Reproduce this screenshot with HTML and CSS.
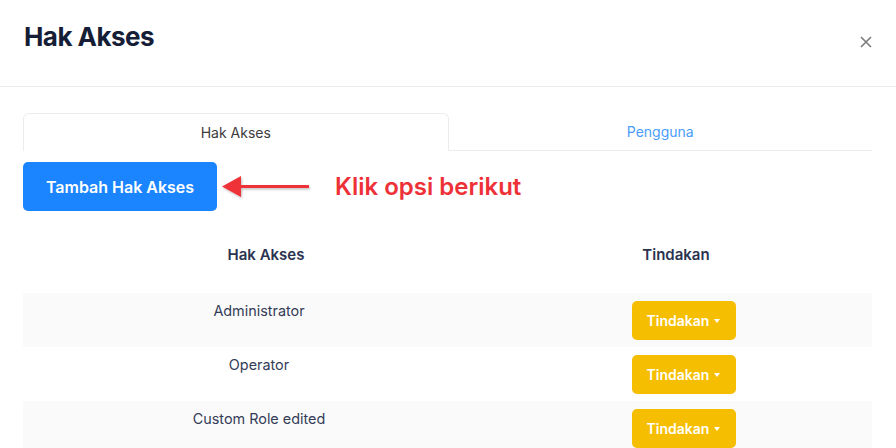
FILE: index.html
```html
<!DOCTYPE html>
<html lang="id">
<head>
<meta charset="utf-8">
<title>Hak Akses</title>
<link rel="stylesheet" href="styles.css">
</head>
<body>
<div class="modal">
  <header class="modal-header">
    <h1 class="modal-title">Hak Akses</h1>
    <button class="close-btn" aria-label="Tutup">
      <svg width="12" height="12" viewBox="0 0 12 12"><path d="M1 1 L11 11 M11 1 L1 11" stroke="#7b7b7b" stroke-width="1.6" fill="none"/></svg>
    </button>
  </header>
  <main class="modal-body">
    <nav class="tabs">
      <div class="tab tab-active">Hak Akses</div>
      <div class="tab tab-link">Pengguna</div>
    </nav>
    <div class="action-row">
      <button class="btn-primary">Tambah Hak Akses</button>
      <div class="annotation">
        <svg class="arrow" width="92" height="26" viewBox="0 0 92 26">
          <defs>
            <filter id="sh" x="-10%" y="-30%" width="130%" height="170%">
              <feDropShadow dx="1" dy="1.5" stdDeviation="1" flood-color="#000" flood-opacity="0.25"/>
            </filter>
          </defs>
          <g filter="url(#sh)">
            <path d="M18 11.5 H88" stroke="#ee3138" stroke-width="3.2" fill="none"/>
            <path d="M1 11.5 L20 1 L20 22 Z" fill="#ee3138"/>
          </g>
        </svg>
        <span class="annotation-text">Klik opsi berikut</span>
      </div>
    </div>
    <div class="table">
      <div class="thead">
        <div class="th">Hak Akses</div>
        <div class="th">Tindakan</div>
      </div>
      <div class="tr odd">
        <div class="td">Administrator</div>
        <div class="td td-action"><button class="btn-warning">Tindakan<span class="caret"></span></button></div>
      </div>
      <div class="tr">
        <div class="td">Operator</div>
        <div class="td td-action"><button class="btn-warning">Tindakan<span class="caret"></span></button></div>
      </div>
      <div class="tr odd">
        <div class="td">Custom Role edited</div>
        <div class="td td-action"><button class="btn-warning">Tindakan<span class="caret"></span></button></div>
      </div>
    </div>
  </main>
</div>
</body>
</html>
```

FILE: styles.css
```css
* { box-sizing: border-box; }
html, body {
  margin: 0;
  padding: 0;
  background: #ffffff;
  font-family: "Inter", "Noto Sans", "Liberation Sans", sans-serif;
  overflow: hidden;
}
.modal {
  width: 896px;
  height: 448px;
}
.modal-header {
  height: 87px;
  padding: 21px 24px 0 24px;
  border-bottom: 1px solid #ececec;
  display: flex;
  justify-content: space-between;
  align-items: flex-start;
}
.modal-title {
  margin: 0;
  font-size: 26px;
  line-height: 32px;
  font-weight: 700;
  color: #161d36;
  letter-spacing: -0.55px;
}
.close-btn {
  margin-top: 15px;
  padding: 0;
  border: 0;
  background: none;
  width: 12px;
  height: 12px;
  display: flex;
}
.modal-body {
  padding: 26px 24px 0 23px;
}
.tabs {
  display: flex;
  height: 38px;
}
.tab {
  flex: 1;
  display: flex;
  align-items: center;
  justify-content: center;
  font-size: 14px;
  color: #3c3c3c;
}
.tab-active {
  border: 1px solid #ececec;
  border-bottom: 0;
  border-radius: 6px 6px 0 0;
}
.tab-link {
  border-bottom: 1px solid #ececec;
  color: #4a9dfb;
}
.action-row {
  margin-top: 11px;
  display: flex;
  align-items: center;
}
.btn-primary {
  width: 194px;
  height: 49px;
  border: 0;
  border-radius: 5px;
  background: #1a85ff;
  color: #ffffff;
  font-family: inherit;
  font-size: 16px;
  font-weight: 600;
}
.annotation {
  display: flex;
  align-items: center;
  margin-left: 4px;
}
.arrow {
  display: block;
  margin-top: 2px;
}
.annotation-text {
  margin-left: 22px;
  font-size: 24px;
  font-weight: 600;
  color: #ee3138;
}
.table {
  width: 849px;
  margin-top: 18px;
}
.thead {
  display: grid;
  grid-template-columns: 486px 334px;
  padding: 16px 0 28px 0;
}
.th {
  text-align: center;
  font-size: 15px;
  line-height: 20px;
  font-weight: 600;
  color: #2a3350;
}
.tr {
  display: grid;
  grid-template-columns: 472px 377px;
  height: 54px;
  padding-top: 8px;
}
.tr.odd {
  background: #fafafa;
}
.td {
  text-align: center;
  font-size: 14.4px;
  line-height: 20px;
  color: #343c58;
}
.btn-warning {
  width: 104px;
  height: 39px;
  border: 0;
  border-radius: 5px;
  background: #f6be00;
  color: #ffffff;
  font-family: inherit;
  font-size: 14px;
  font-weight: 600;
  display: inline-flex;
  align-items: center;
  justify-content: center;
  padding: 0;
}
.caret {
  display: inline-block;
  margin-left: 5px;
  width: 0;
  height: 0;
  border-left: 3.5px solid transparent;
  border-right: 3.5px solid transparent;
  border-top: 4px solid #ffffff;
}
```
